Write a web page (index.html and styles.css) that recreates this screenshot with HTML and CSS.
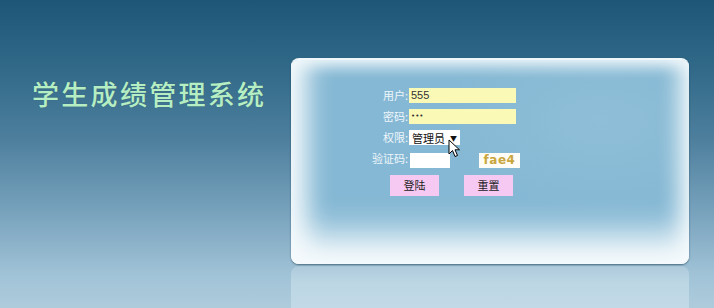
FILE: index.html
```html
<!DOCTYPE html>
<html lang="zh">
<head>
<meta charset="utf-8">
<title>学生成绩管理系统</title>
<link rel="stylesheet" href="styles.css">
</head>
<body>
<div class="page">
  <h1 class="title">学生成绩管理系统</h1>
  <div class="stage">
    <div class="card">
      <form class="form">
        <label class="lbl">用户:</label>
        <div class="field"><span class="input wide">555</span></div>
        <label class="lbl">密码:</label>
        <div class="field"><span class="input wide dots">•••</span></div>
        <label class="lbl">权限:</label>
        <div class="field sel-wrap">
          <span class="select">管理员<span class="arrow">▼</span></span>
          <svg class="cursor" width="13" height="20" viewBox="0 0 13 20"><path d="M1 1 L1 15 L4.5 11.5 L7 17.5 L9.5 16.5 L7 10.8 L11.5 10.8 Z" fill="#fff" stroke="#000" stroke-width="1" stroke-linejoin="round"/></svg>
        </div>
        <label class="lbl">验证码:</label>
        <div class="field code-row"><span class="input code"></span><span class="captcha">fae4</span></div>
        <div class="buttons">
          <span class="btn">登陆</span>
          <span class="btn">重置</span>
        </div>
      </form>
    </div>
    <div class="reflect"></div>
  </div>
</div>
</body>
</html>
```
FILE: styles.css
```css
html, body {
  margin: 0;
  padding: 0;
}
body {
  width: 714px;
  height: 308px;
  overflow: hidden;
  font-family: "Noto Sans CJK SC", "Liberation Sans", sans-serif;
  background: linear-gradient(180deg, #1d5677 0%, #2f6787 20%, #4d7f9d 45%, #7aa4be 70%, #a2c4d8 90%, #aecbdb 100%);
}
.page {
  display: flex;
  height: 308px;
}
.title {
  margin: 76px 0 0 32px;
  width: 259px;
  font-size: 27px;
  line-height: 36px;
  font-weight: 500;
  letter-spacing: 2.3px;
  color: #b6eec4;
  text-shadow: 0 0 1px rgba(40,80,70,.5);
}
.stage {
  margin-top: 58px;
  width: 398px;
  display: flex;
  flex-direction: column;
}
.card {
  height: 206px;
  border-radius: 8px;
  box-sizing: border-box;
  background:
    radial-gradient(ellipse 40% 45% at 78% 30%, rgba(150,195,218,.6) 0%, rgba(150,195,218,0) 100%),
    #85b8d4;
  box-shadow:
    inset 0 -38px 34px -8px #f5fafc,
    inset 22px 0 26px -6px #eff7fa,
    inset -14px 0 22px -6px #eaf4f8,
    inset 0 10px 14px -6px #e6f1f6,
    0 1px 2px rgba(20,50,70,.6);
  border-top: 2px solid #f0f7fa;
  position: relative;
}
.form {
  display: grid;
  grid-template-columns: 118px auto;
  grid-auto-rows: min-content;
  row-gap: 6px;
  padding-top: 28px;
  margin: 0;
}
.lbl {
  text-align: right;
  font-size: 11px;
  line-height: 15px;
  color: #eef6fb;
  padding-right: 1px;
}
.field {
  display: flex;
  align-items: center;
  height: 15px;
}
.input {
  display: block;
  box-sizing: border-box;
  height: 15px;
  background: #fbf9b6;
  font-size: 11px;
  line-height: 15px;
  color: #333;
  padding-left: 2px;
  font-family: "Liberation Sans", sans-serif;
}
.wide { width: 107px; }
.dots { font-family: "DejaVu Sans", sans-serif; font-size: 7px; letter-spacing: 0; line-height: 15px; }
.sel-wrap { position: relative; }
.select {
  display: flex;
  align-items: center;
  box-sizing: border-box;
  width: 51px;
  height: 15px;
  background: #fff;
  font-size: 11px;
  color: #111;
  padding-left: 3px;
}
.arrow {
  font-size: 7px;
  margin-left: 5px;
}
.cursor {
  position: absolute;
  left: 39px;
  top: 9px;
}
.code-row { height: 16px; margin-top: 1px; }
.input.code {
  width: 40px;
  height: 15px;
  background: #fff;
  margin-left: 1px;
}
.captcha {
  margin-left: 29px;
  width: 41px;
  height: 15px;
  background: #fffdf5;
  color: #c9a63e;
  font-family: "DejaVu Sans", sans-serif;
  font-weight: bold;
  font-size: 12px;
  line-height: 15px;
  text-align: center;
  letter-spacing: 0.5px;
}
.buttons {
  grid-column: 1 / 3;
  display: flex;
  gap: 25px;
  padding-left: 99px;
  margin-top: 1px;
}
.btn {
  width: 49px;
  height: 21px;
  background: #f6c9f2;
  font-size: 11px;
  line-height: 21px;
  text-align: center;
  color: #222;
}
.reflect {
  margin-top: 2px;
  flex: 1;
  border-radius: 8px 8px 0 0;
  background: linear-gradient(180deg, #aecadb 0%, #bcd6e4 40%, #c2dae7 100%);
}
```
